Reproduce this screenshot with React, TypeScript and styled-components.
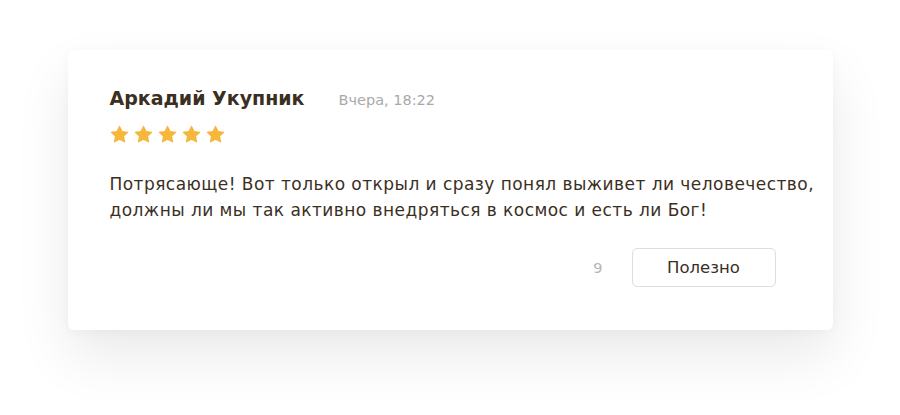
import * as React from 'react';
import styled, {createGlobalStyle} from 'styled-components';

const GlobalStyle = createGlobalStyle`
  html, body {
    margin: 0;
    padding: 0;
    background: #fff;
  }
  body {
    font-family: "DejaVu Sans", "Noto Sans", sans-serif;
    color: #3b2f1f;
  }
`;

const Page = styled.div`
  display: flex;
  justify-content: center;
  padding: 50px 0 85px;
`;

const Card = styled.div`
  width: 765px;
  height: 280px;
  box-sizing: border-box;
  padding: 37px 16px 0 42px;
  background: #fff;
  border-radius: 6px;
  box-shadow: 0 26px 55px rgba(0, 0, 0, 0.085), 0 2px 12px rgba(0, 0, 0, 0.03);
  display: flex;
  flex-direction: column;
`;

const Header = styled.div`
  display: flex;
  align-items: baseline;
  gap: 34px;
`;

const Author = styled.div`
  font-size: 19px;
  font-weight: 700;
  color: #3b2f1f;
`;

const Date = styled.div`
  font-size: 14.5px;
  color: #a9a9a9;
`;

const Stars = styled.div`
  display: flex;
  gap: 5px;
  margin-top: 16px;
`;

const Text = styled.p`
  margin: 27px 0 0;
  font-size: 17px;
  letter-spacing: 0.45px;
  line-height: 26px;
  white-space: nowrap;
  color: #3b2f1f;
`;

const Footer = styled.div`
  display: flex;
  justify-content: flex-end;
  align-items: center;
  gap: 29px;
  margin: 25px 41px 0 0;
`;

const Count = styled.span`
  font-size: 14.5px;
  color: #b5b5b5;
`;

const Button = styled.button`
  width: 144px;
  height: 39px;
  border: 1px solid #dedede;
  border-radius: 5px;
  background: #fff;
  font-family: inherit;
  font-size: 16.5px;
  color: #3b2f1f;
  cursor: pointer;
`;

const Star = () => (
  <svg width="19" height="19" viewBox="0 0 24 24">
    <path
      d="M12 1.8l3.1 6.5 7.1.9-5.2 4.9 1.3 7.1L12 17.8l-6.3 3.4 1.3-7.1L1.8 9.2l7.1-.9z"
      fill="#f7b73c"
      stroke="#f7b73c"
      strokeWidth="1.6"
      strokeLinejoin="round"
    />
  </svg>
);

const App = () => (
  <>
    <GlobalStyle />
    <Page>
      <Card>
        <Header>
          <Author>Аркадий Укупник</Author>
          <Date>Вчера, 18:22</Date>
        </Header>
        <Stars>
          {[0, 1, 2, 3, 4].map((i) => (
            <Star key={i} />
          ))}
        </Stars>
        <Text>
          Потрясающе! Вот только открыл и сразу понял выживет ли человечество,
          <br />
          должны ли мы так активно внедряться в космос и есть ли Бог!
        </Text>
        <Footer>
          <Count>9</Count>
          <Button>Полезно</Button>
        </Footer>
      </Card>
    </Page>
  </>
);

export default App;
